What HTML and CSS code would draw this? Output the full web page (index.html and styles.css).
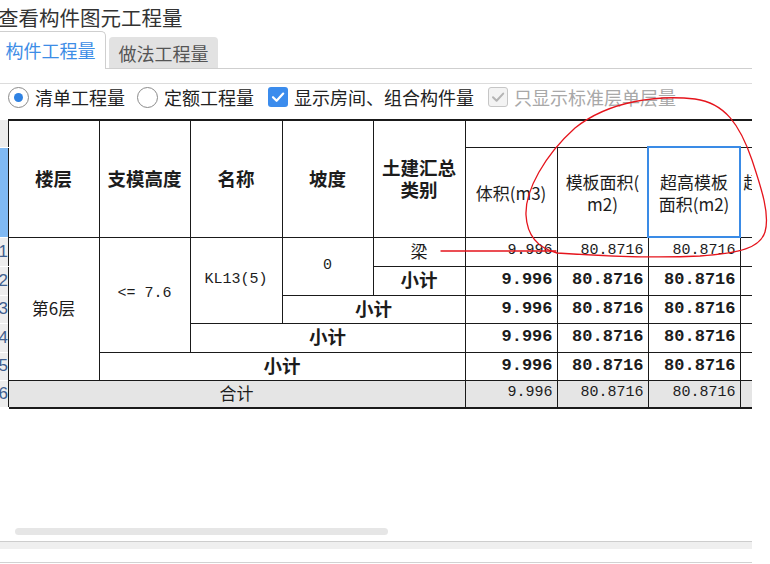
FILE: index.html
```html
<!DOCTYPE html>
<html lang="zh-CN">
<head>
<meta charset="utf-8">
<title>查看构件图元工程量</title>
<link rel="stylesheet" href="styles.css">
</head>
<body>
<div class="page">
  <div class="content">
    <div class="title">查看构件图元工程量</div>
    <div class="tabs">
      <div class="tab active">构件工程量</div>
      <div class="tab">做法工程量</div>
    </div>
    <div class="panel">
      <div class="options">
        <label class="opt"><span class="radio on"></span>清单工程量</label>
        <label class="opt"><span class="radio"></span>定额工程量</label>
        <label class="opt"><span class="check on"><svg viewBox="0 0 20 20" width="20" height="20"><path d="M5 10.2 L8.6 13.8 L15.2 6.6" fill="none" stroke="#fff" stroke-width="2.2" stroke-linecap="round" stroke-linejoin="round"/></svg></span>显示房间、组合构件量</label>
        <label class="opt disabled"><span class="check dis"><svg viewBox="0 0 20 20" width="20" height="20"><path d="M5 10.2 L8.6 13.8 L15.2 6.6" fill="none" stroke="#b4b4b4" stroke-width="2" stroke-linecap="round" stroke-linejoin="round"/></svg></span>只显示标准层单层量</label>
      </div>
      <div class="grid-area">
        <table class="qty">
          <colgroup>
            <col class="c-rn">
            <col class="c91"><col class="c91"><col class="c92"><col class="c91"><col class="c92">
            <col class="c92"><col class="c91"><col class="c92"><col class="c92">
          </colgroup>
          <thead>
            <tr class="h1">
              <th class="rn rn-top"></th>
              <th rowspan="2">楼层</th>
              <th rowspan="2">支模高度</th>
              <th rowspan="2">名称</th>
              <th rowspan="2">坡度</th>
              <th rowspan="2" class="two">土建汇总<br>类别</th>
              <th colspan="4" class="group"></th>
            </tr>
            <tr class="h2">
              <th class="rn rn-sel"></th>
              <th class="sub">体积(m3)</th>
              <th class="sub">模板面积(<br>m2)</th>
              <th class="sub selected">超高模板<br>面积(m2)</th>
              <th class="sub cut">超高体积(<br>m3)</th>
            </tr>
          </thead>
          <tbody>
            <tr class="r29">
              <td class="rn"><div>1</div></td>
              <td rowspan="5">第6层</td>
              <td rowspan="4" class="mono">&lt;= 7.6</td>
              <td rowspan="3" class="mono">KL13(5)</td>
              <td rowspan="2" class="mono zero">0</td>
              <td>梁</td>
              <td class="num">9.996</td>
              <td class="num">80.8716</td>
              <td class="num">80.8716</td>
              <td></td>
            </tr>
            <tr class="r29">
              <td class="rn"><div>2</div></td>
              <td class="sum">小计</td>
              <td class="num b">9.996</td>
              <td class="num b">80.8716</td>
              <td class="num b">80.8716</td>
              <td></td>
            </tr>
            <tr class="r28">
              <td class="rn"><div>3</div></td>
              <td colspan="2" class="sum">小计</td>
              <td class="num b">9.996</td>
              <td class="num b">80.8716</td>
              <td class="num b">80.8716</td>
              <td></td>
            </tr>
            <tr class="r29">
              <td class="rn"><div>4</div></td>
              <td colspan="3" class="sum">小计</td>
              <td class="num b">9.996</td>
              <td class="num b">80.8716</td>
              <td class="num b">80.8716</td>
              <td></td>
            </tr>
            <tr class="r28">
              <td class="rn"><div>5</div></td>
              <td colspan="4" class="sum">小计</td>
              <td class="num b">9.996</td>
              <td class="num b">80.8716</td>
              <td class="num b">80.8716</td>
              <td></td>
            </tr>
            <tr class="r28 total">
              <td class="rn"><div>6</div></td>
              <td colspan="5">合计</td>
              <td class="num">9.996</td>
              <td class="num">80.8716</td>
              <td class="num">80.8716</td>
              <td></td>
            </tr>
          </tbody>
        </table>
        <div class="hscroll"><div class="thumb"></div></div>
      </div>
      <div class="statusbar"></div>
      <div class="bottomline"></div>
    </div>
  </div>
  <svg class="annot" viewBox="0 0 770 564" width="770" height="564">
    <path d="M441 251 L556 251" />
    <path d="M557 253 C538 248 527 235 526 215 C525 190 545 155 575 128 C610 100 660 95 695 99 C725 103 740 125 752 160 C762 190 770 215 765 232 C760 248 740 253 700 256 C660 258 600 256 557 253" />
  </svg>
</div>
</body>
</html>
```

FILE: styles.css
```css
* { box-sizing: border-box; }

body {
  margin: 0;
  background: #fff;
  font-family: "Noto Sans CJK SC", "Noto Sans", sans-serif;
  color: #1c1c1c;
}

.page {
  position: relative;
  width: 770px;
  height: 564px;
  overflow: hidden;
  background: #fff;
}

.content {
  width: 752px;
  overflow: hidden;
}

.title {
  height: 31px;
  padding-top: 5px;
  margin-left: -2px;
  font-size: 20.5px;
  line-height: 24px;
  color: #333;
  white-space: nowrap;
}

.tabs {
  display: flex;
  align-items: flex-end;
  height: 38px;
  border-bottom: 1px solid #cfcfcf;
}

.tab {
  display: flex;
  align-items: center;
  justify-content: center;
  font-size: 18px;
  white-space: nowrap;
}

.tab.active {
  width: 107px;
  height: 38px;
  margin-left: -1px;
  margin-bottom: -1px;
  border: 1px solid #cfcfcf;
  border-bottom: none;
  border-radius: 0 5px 0 0;
  background: #fff;
  color: #3d8de6;
  padding-bottom: 2px;
  padding-right: 4px;
}

.tab:not(.active) {
  width: 109px;
  height: 31px;
  margin-left: 3px;
  background: #e2e2e2;
  color: #555;
  border-radius: 4px 4px 0 0;
}

.panel {
  margin-top: 14px;
  border-top: 1px solid #dcdcdc;
}

.options {
  display: flex;
  align-items: center;
  height: 26px;
  padding-left: 8px;
  font-size: 18px;
  color: #222;
  white-space: nowrap;
}

.opt {
  display: flex;
  align-items: center;
  gap: 6px;
  margin-right: 12px;
}

.opt.disabled { color: #a8a8a8; }

.radio {
  width: 21px;
  height: 21px;
  border-radius: 50%;
  border: 1px solid #8a8a8a;
  background: #fff;
  display: flex;
  align-items: center;
  justify-content: center;
}

.radio.on::after {
  content: "";
  width: 9px;
  height: 9px;
  border-radius: 50%;
  background: #2f82e3;
}

.check {
  width: 20px;
  height: 20px;
  border-radius: 3px;
  display: flex;
  margin-left: 2px;
}

.check.on { background: #3b8ced; }
.check.dis { border: 1px solid #c6c6c6; background: #f3f3f3; }
.check.dis svg { margin: -1px; }

.grid-area {
  margin-top: 9px;
  height: 422px;
  display: flex;
  flex-direction: column;
}

table.qty {
  border-collapse: collapse;
  table-layout: fixed;
  width: 832px;
  flex: none;
}

.c-rn { width: 8px; }
.c91 { width: 91px; }
.c92 { width: 92px; }

.qty th, .qty td {
  border: 1px solid #1a1a1a;
  padding: 0;
  overflow: hidden;
  white-space: nowrap;
  text-align: center;
  vertical-align: middle;
}

.qty thead tr.h1 th { border-top-width: 2px; }
.qty tbody tr.total td { border-bottom-width: 2px; }

.qty th {
  font-size: 18.5px;
  font-weight: 700;
  line-height: 22px;
  padding-bottom: 2px;
}

.h1 { height: 27px; }
.h2 { height: 90px; }
.r29 { height: 29px; }
.r28 { height: 28px; }

.qty th.sub {
  font-weight: 400;
  font-size: 17px;
  line-height: 22px;
  padding-top: 1px;
  padding-bottom: 0;
}

.qty th.cut { padding-right: 12px; }

.qty th.selected {
  outline: 2px solid #3a8be6;
  outline-offset: -1px;
}

.qty td {
  font-size: 17px;
  line-height: 20px;
  padding-bottom: 1px;
}

.qty td.mono {
  font-family: "Liberation Mono", monospace;
  font-size: 15px;
}

.qty td.sum {
  font-weight: 700;
  font-size: 18.5px;
  padding-bottom: 3px;
}

.qty td.num {
  text-align: right;
  padding-right: 4px;
  font-family: "Liberation Mono", monospace;
  font-size: 15px;
}

.qty td.num.b {
  font-weight: 700;
  font-size: 17px;
}

.qty tr.total td { background: #e5e5e5; }

.qty .rn {
  border-left: none;
  border-right: none;
  border-top: 1px solid #fff;
  border-bottom: 1px solid #fff;
  background: #ededed;
  padding: 0;
}

.qty th.rn-top { border-top: none; background: #ececec; }
.qty th.rn-sel { background: #80b9f3; }
.qty tr.total td.rn { background: #ededed; }

.qty td.rn div {
  width: 8px;
  display: flex;
  justify-content: flex-end;
  overflow: hidden;
  font-family: "Liberation Sans", sans-serif;
  font-size: 17px;
  color: #3f5f8f;
}

.hscroll {
  margin-top: auto;
  margin-bottom: 6px;
  padding-left: 15px;
}

.thumb {
  width: 373px;
  height: 7px;
  border-radius: 4px;
  background: #e6e6e6;
}

.statusbar {
  height: 8px;
  border-top: 1px solid #cdcdcd;
  background: #efefef;
}

.bottomline {
  margin-top: 13px;
  border-top: 1px solid #d2d2d2;
}

.annot {
  position: absolute;
  top: 0;
  left: 0;
  pointer-events: none;
}

.annot path {
  fill: none;
  stroke: #e5141c;
  stroke-width: 1.3;
  stroke-linecap: round;
}
```
